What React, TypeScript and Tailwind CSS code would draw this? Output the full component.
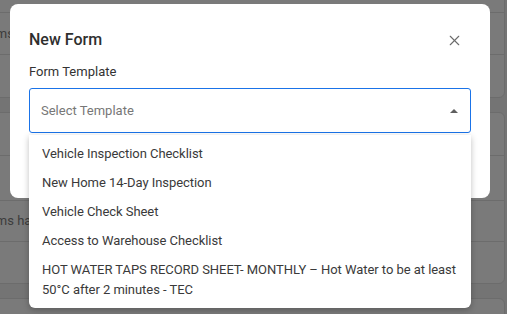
import { X } from "lucide-react";

const items = [
  "Vehicle Inspection Checklist",
  "New Home 14-Day Inspection",
  "Vehicle Check Sheet",
  "Access to Warehouse Checklist",
  "HOT WATER TAPS RECORD SHEET- MONTHLY – Hot Water to be at least 50°C after 2 minutes - TEC",
];

const App = () => {
  return (
    <div
      className="relative h-[314px] w-[507px] overflow-hidden bg-[#747474]"
      style={{ fontFamily: "Roboto, 'Liberation Sans', sans-serif" }}
    >
      {/* dimmed page behind the modal */}
      <div className="-ml-10 mr-[2px] flex flex-col gap-[14px]">
        <div className="-mt-[30px] flex flex-col rounded-b-[6px] border border-[#6c6c6c] bg-[#7a7a7a]">
          <div className="h-[42px] border-b border-[#6c6c6c]" />
          <div className="flex h-[42px] items-center border-b border-[#6c6c6c] pl-[16px] text-[13px] text-[#3c3c3c]">
            Forms
          </div>
          <div className="h-[42px]" />
        </div>
        <div className="flex flex-col rounded-[6px] border border-[#6c6c6c] bg-[#7a7a7a]">
          <div className="h-[43px] border-b border-[#6c6c6c]" />
          <div className="h-[45px] border-b border-[#6c6c6c]" />
          <div className="flex h-[41px] items-center border-b border-[#6c6c6c] pl-[16px] text-[13px] text-[#3c3c3c]">
            Forms have been sent
          </div>
          <div className="h-[41px]" />
        </div>
        <div className="h-[40px] rounded-[6px] border border-[#6c6c6c] bg-[#7a7a7a]" />
      </div>

      {/* modal */}
      <div className="absolute left-[10px] top-[4px] h-[194px] w-[480px] rounded-[8px] bg-white px-[19px] pt-[26px]">
        <div className="flex items-center justify-between">
          <h2 className="text-[16px] font-medium leading-[20px] text-[#2f2f2f]">New Form</h2>
          <X className="mr-[8px] h-[17px] w-[17px] text-[#6b6b6b]" strokeWidth={1.6} />
        </div>
        <div className="mt-[13px] text-[13px] leading-[18px] text-[#333333]">Form Template</div>
        <div className="mt-[7px] flex h-[45px] items-center justify-between rounded-[3px] border border-[#1a73e8] pl-[11px] pr-[12px]">
          <span className="text-[13px] text-[#777777]">Select Template</span>
          <span className="h-0 w-0 border-x-[4px] border-b-[4px] border-x-transparent border-b-[#5f5f5f]" />
        </div>
      </div>

      {/* dropdown list */}
      <ul className="absolute left-[29px] top-[135px] w-[442px] rounded-b-[6px] bg-white py-[4px] shadow-[0_2px_6px_rgba(0,0,0,0.25)]">
        {items.map((t) => (
          <li
            key={t}
            className="py-[4.5px] pl-[13px] pr-[6px] text-[13px] leading-[20px] tracking-[-0.05px] text-[#3a3a3a]"
          >
            {t}
          </li>
        ))}
      </ul>
    </div>
  );
};

export default App;
